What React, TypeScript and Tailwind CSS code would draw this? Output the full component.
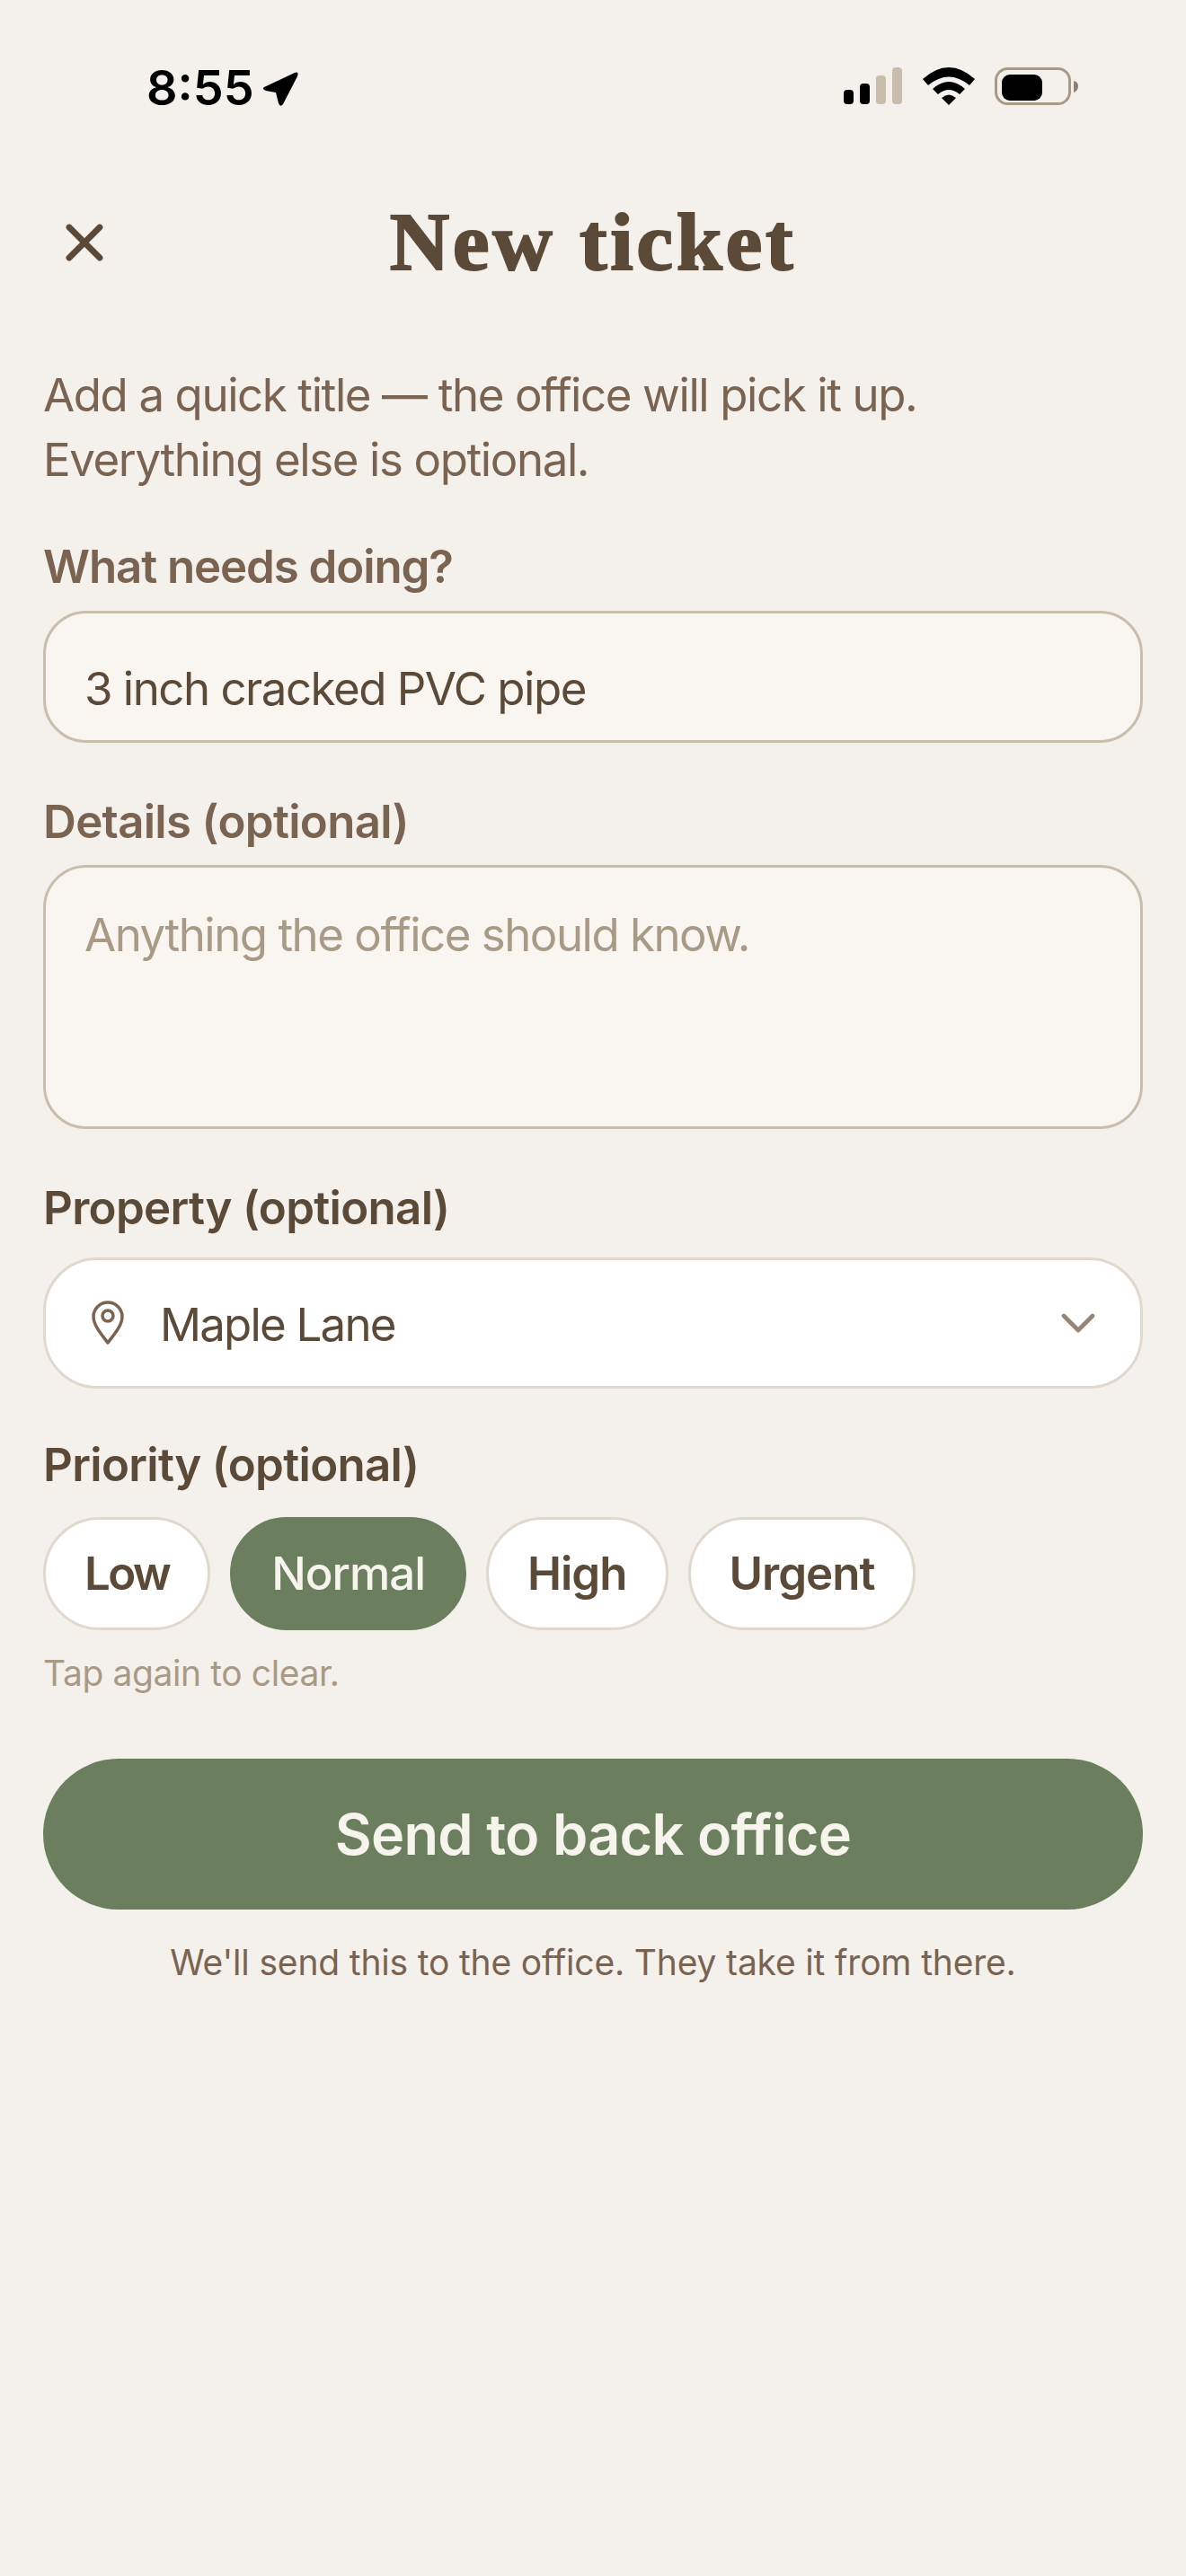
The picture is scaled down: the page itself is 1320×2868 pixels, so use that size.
import React from "react";
import { ChevronDown, X } from "lucide-react";

const StatusBar = () => (
  <div className="flex h-[134px] items-end justify-between pl-[163px] pr-[119px]">
    <div className="mb-[4px] flex items-center gap-[7px]">
      <span className="text-[54px] font-semibold leading-[64px] text-black">8:55</span>
      <svg width="44" height="44" viewBox="0 0 44 44">
        <path d="M4 21 L38 5 Q43 3 41 9 L25 40 Q22 44 20 39 L17 27 L6 25 Q1 23 4 21 Z" fill="#000" />
      </svg>
    </div>
    <div className="mb-[17px] flex items-center gap-[22px]">
      <svg width="66" height="42" viewBox="0 0 66 42">
        <rect x="0" y="25" width="11" height="16" rx="4" fill="#000" />
        <rect x="18" y="18" width="11" height="23" rx="4" fill="#000" />
        <rect x="36" y="9" width="11" height="32" rx="4" fill="#c9bdac" />
        <rect x="54" y="0" width="11" height="41" rx="4" fill="#c9bdac" />
      </svg>
      <svg width="58" height="42" viewBox="0 0 58 42">
        <path d="M0 13 Q29 -13 58 13 L52 20 Q29 1 6 20 Z M11 24 Q29 8 47 24 L41 30 Q29 20 17 30 Z M21 34 Q29 27 37 34 L29 42 Z" fill="#000" />
      </svg>
      <svg width="94" height="42" viewBox="0 0 94 42">
        <rect x="1.5" y="1.5" width="82" height="39" rx="13" fill="none" stroke="#a89a85" strokeWidth="3" />
        <rect x="8" y="8" width="45" height="29" rx="9" fill="#000" />
        <path d="M88 15 Q93 16 93 21 Q93 26 88 28 Z" fill="#8a8074" />
      </svg>
    </div>
  </div>
);

const Label = ({ children, tone = "text-[#7a6350]" }: { children: React.ReactNode; tone?: string }) => (
  <div className={`text-[51px] font-semibold leading-[62px] tracking-[-0.7px] ${tone}`}>{children}</div>
);

const Pill = ({ label, active, tight }: { label: string; active?: boolean; tight?: boolean }) => (
  <div
    className={`flex h-[126px] items-center rounded-full border-[3px] px-[43px] text-[51px] ${tight ? "tracking-[-2.6px]" : "tracking-[-1px]"} ${
      active ? "border-[#6b7f5e] bg-[#6b7f5e] font-medium text-[#f7f4ee]" : "border-[#e0d8cc] bg-white font-semibold text-[#5c4a38]"
    }`}
  >
    {label}
  </div>
);

export default function App() {
  return (
    <div className="h-[2868px] w-[1320px] overflow-hidden bg-[#f4f1ec] font-['Inter',sans-serif] antialiased">
      <StatusBar />

      <div className="relative mt-[85px] flex h-[100px] items-center justify-center">
        <X className="absolute left-[60px] top-[17px]" size={68} strokeWidth={2.4} color="#5c4a38" />
        <h1 className="font-['Liberation_Serif',serif] text-[92px] font-bold leading-[100px] tracking-[3.6px] text-[#5c4a38] [-webkit-text-stroke:2px_#5c4a38]">
          New ticket
        </h1>
      </div>

      <div className="px-[48px]">
        <p className="mt-[85px] text-[51px] leading-[72px] tracking-[-1.4px] text-[#7a6350]">
          Add a quick title — the office will pick it up.
          <br />
          Everything else is optional.
        </p>

        <div className="mt-[52px]">
          <Label>
            <span className="tracking-[-1.1px]">What needs doing?</span>
          </Label>
        </div>
        <div className="mt-[18px] flex h-[147px] items-center rounded-[48px] border-[3px] border-[#c9bdac] bg-[#f9f6f1] px-[43px] pt-[28px] text-[51px] tracking-[-1.5px] text-[#5c4a38]">
          3 inch cracked PVC pipe
        </div>

        <div className="mt-[57px]">
          <Label>Details (optional)</Label>
        </div>
        <div className="mt-[17px] h-[294px] rounded-[48px] border-[3px] border-[#c9bdac] bg-[#f9f6f1] px-[43px] pt-[44px] text-[51px] leading-[62px] tracking-[-1.5px] text-[#a89a85]">
          Anything the office should know.
        </div>

        <div className="mt-[57px]">
          <Label tone="text-[#5c4a38]">Property (optional)</Label>
        </div>
        <div className="mt-[24px] flex h-[146px] items-center rounded-[60px] border-[3px] border-[#e0d8cc] bg-white pl-[51px] pr-[37px] text-[51px] tracking-[-1.5px] text-[#5c4a38]">
          <svg width="36" height="50" viewBox="0 0 36 50" fill="none" stroke="#7a6350" strokeWidth="3.5" strokeLinejoin="round">
            <path d="M18 47 C12 39 2 28 2 18 A16 16 0 0 1 34 18 C34 28 24 39 18 47 Z" />
            <circle cx="18" cy="17" r="6" />
          </svg>
          <span className="ml-[40px] pt-[4px] tracking-[-1.8px]">Maple Lane</span>
          <ChevronDown className="ml-auto" size={64} strokeWidth={1.8} color="#948672" />
        </div>

        <div className="mt-[54px]">
          <Label tone="text-[#5c4a38]">Priority (optional)</Label>
        </div>
        <div className="mt-[27px] flex gap-[22px]">
          <Pill label="Low" tight />
          <Pill label="Normal" active />
          <Pill label="High" />
          <Pill label="Urgent" />
        </div>
        <p className="mt-[25px] text-[39px] leading-[46px] tracking-[-0.4px] text-[#a89a85]">Tap again to clear.</p>

        <div className="mt-[72px] flex h-[168px] items-center justify-center rounded-full bg-[#6b7f5e] text-[63px] font-semibold tracking-[-0.7px] text-[#f7f4ee]">
          Send to back office
        </div>
        <p className="mt-[36px] text-center text-[39px] leading-[46px] tracking-[-0.17px] text-[#7a6350]">
          We'll send this to the office. They take it from there.
        </p>
      </div>
    </div>
  );
}
